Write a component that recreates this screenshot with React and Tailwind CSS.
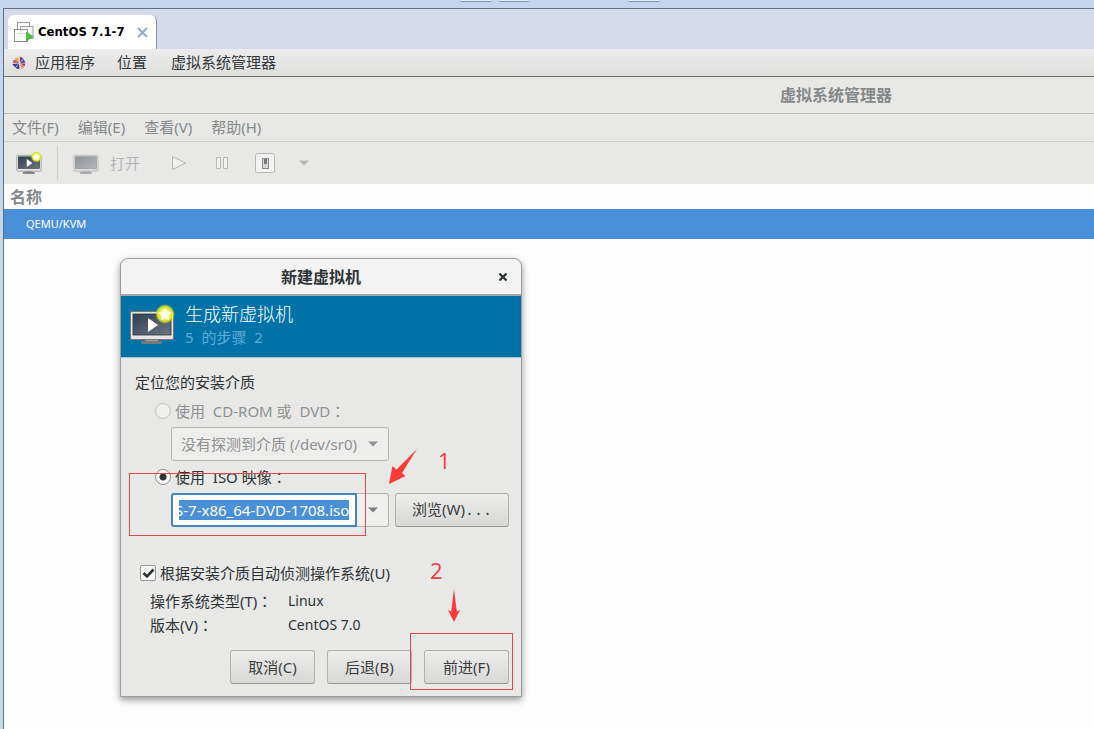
import React, { useEffect, useRef, useState } from 'react';

const MonitorIcon = ({ className, dimmed, star, play }) => (
  <svg viewBox="0 0 46 42" className={className} aria-hidden="true">
    <defs>
      <linearGradient id={dimmed ? 'scrDim' : 'scr'} x1="0" y1="0" x2="1" y2="1">
        <stop offset="0" stopColor={dimmed ? '#8f9499' : '#2f3e52'} />
        <stop offset="1" stopColor={dimmed ? '#b4b7ba' : '#6d7683'} />
      </linearGradient>
      <radialGradient id="glow">
        <stop offset="0" stopColor="#ffffff" />
        <stop offset="0.4" stopColor="#fdfb7a" />
        <stop offset="0.75" stopColor="#e2e81c" stopOpacity="0.9" />
        <stop offset="1" stopColor="#d8e010" stopOpacity="0" />
      </radialGradient>
    </defs>
    <path d="M17 34h11l2 5H15z" fill={dimmed ? '#b9b9b7' : '#9b9d9a'} />
    <rect x="12" y="37" width="21" height="3" rx="1" fill={dimmed ? '#a3a3a1' : '#787a76'} />
    <rect x="1.5" y="7.5" width="43" height="28" rx="1.5" fill={dimmed ? '#dcdcda' : '#e6e6e4'} stroke={dimmed ? '#a9a9a7' : '#777975'} />
    <rect x="4" y="10" width="38" height="21" fill={dimmed ? 'url(#scrDim)' : 'url(#scr)'} stroke={dimmed ? '#8d8f91' : '#2c3440'} strokeWidth="0.8" />
    {play && <path d="M19 14v14l10-7z" fill="#fff" />}
    {star && (
      <>
        <circle cx="36" cy="10" r="10" fill="url(#glow)" />
        <path d="M36 3.5l2 4.3 4.6.6-3.4 3.2.9 4.6-4.1-2.3-4.1 2.3.9-4.6-3.4-3.2 4.6-.6z" fill="#fffff0" />
      </>
    )}
  </svg>
);

const TabIcon = () => (
  <svg viewBox="0 0 20 20" className="h-5 w-5" fill="none" aria-hidden="true">
    <rect x="3.5" y="0.5" width="12" height="10" fill="#fff" stroke="#9a9a9a" />
    <rect x="6.5" y="4.5" width="12.5" height="12" fill="#fff" stroke="#9a9a9a" />
    <rect x="0.5" y="7.5" width="13" height="12" fill="#fff" stroke="#8c8c8c" />
    <path d="M6.5 8v6M3 11.5h9" stroke="#dcdcdc" />
    <path d="M12 9.5v10l8-5z" fill="#55b948" />
  </svg>
);

const CentosLogo = () => (
  <svg viewBox="0 0 16 16" className="h-3.5 w-3.5" aria-hidden="true">
    <path d="M3 2.500l4-1.500 1.500 6-2 0z" fill="#f0b63a" />
    <path d="M9 0.500l4 2-4 5z" fill="#7d3b8e" />
    <path d="M13 3.500l2.500 4-6.500 1z" fill="#5c4a9c" />
    <path d="M1 5l3-1 4 4-7 0z" fill="#c9627e" />
    <path d="M0.500 9l7-0.500-4 4.500z" fill="#3a3a8c" />
    <path d="M4 14l4-5.500 0.500 6.500z" fill="#2f3f95" />
    <path d="M9 9l2 6 3-2.500z" fill="#e8964a" />
    <path d="M9.500 8.500l6 0-1.500 3.500z" fill="#b23c7c" />
  </svg>
);

const Caret = ({ className }) => (
  <svg viewBox="0 0 10 6" className={className} aria-hidden="true">
    <path d="M0 0.500h10L5 5.500z" fill="currentColor" />
  </svg>
);

// full-width colon, centred in its cell
const Colon = () => <span className="font-['Noto_Sans_CJK_TC',sans-serif]">：</span>;

const DialogButton = ({ children, className }) => (
  <button
    className={`h-[34px] rounded-[3px] border border-[#b0b0ae] border-b-[#969694] bg-linear-to-b from-[#ededec] to-[#d8d8d6] text-[15px] text-[#3a3d3e] ${className}`}
  >
    {children}
  </button>
);

const Radio = ({ id, label, checked, disabled, onChange }) => (
  <div className="flex h-[22px] items-center gap-1 pl-5">
    <input
      id={id}
      type="radio"
      name="media"
      checked={checked}
      disabled={disabled}
      onChange={onChange}
      className="h-4 w-4 appearance-none rounded-full border border-[#8f9190] bg-[#f8f8f8] bg-[radial-gradient(circle,#2e3436_3px,transparent_4px)] not-checked:bg-none disabled:border-[#c2c2c0] disabled:bg-[#efefee]"
    />
    <label htmlFor={id} className={`whitespace-pre ${disabled ? 'text-[#8f9192]' : 'text-[#2e3436]'}`}>
      {label}
      <Colon />
    </label>
  </div>
);

const NewVmDialog = () => {
  const [media, setMedia] = useState('iso');
  const [iso, setIso] = useState('S-7-x86_64-DVD-1708.iso');
  const [detect, setDetect] = useState(true);
  const isoRef = useRef(null);

  // keep the end of the file name in view
  useEffect(() => {
    isoRef.current.scrollLeft = isoRef.current.scrollWidth;
  }, []);

  return (
    <section
      aria-label="新建虚拟机"
      className="absolute top-[19px] left-[116px] w-[402px] rounded-t-lg border border-[#9b9d9b] bg-[#e8e8e7] text-[15px] leading-[22px] text-[#2e3436] shadow-[0_3px_7px_rgba(0,0,0,0.4)]"
    >
      <header className="relative flex h-[35px] items-center justify-center rounded-t-lg bg-[#f3f3f3]">
        <h2 className="text-base font-bold">新建虚拟机</h2>
        <button aria-label="关闭" className="absolute right-3 flex h-3 w-3 items-center justify-center">
          <svg viewBox="0 0 10 10" className="h-2.5 w-2.5" aria-hidden="true">
            <path d="M1.500 1.500l7 7M8.500 1.500l-7 7" stroke="#2e3436" strokeWidth="2.300" />
          </svg>
        </button>
      </header>

      {/* Banner */}
      <div className="flex h-16 items-start gap-2.5 border-t-2 border-b border-t-[#a4a9ab] border-b-[#a9c6d4] bg-[#0072a8] pt-1.5 pl-2">
        <MonitorIcon className="mt-0.5 h-[42px] w-[46px]" star play />
        <div>
          <h3 className="text-lg leading-6 font-light text-white">生成新虚拟机</h3>
          <p className="whitespace-pre text-[#5eabd6]">5  的步骤  2</p>
        </div>
      </div>

      <div className="pt-[13px] pr-3 pb-3 pl-3.5">
        <p className="mb-[7px]">定位您的安装介质</p>

        <Radio
          id="cdrom"
          label="使用  CD-ROM 或  DVD"
          checked={media === 'cdrom'}
          disabled
          onChange={() => setMedia('cdrom')}
        />
        <div className="relative my-[5px] ml-9 w-[218px] text-[#8f9192]">
          <select
            aria-label="没有探测到介质 (/dev/sr0)"
            disabled
            className="block h-[34px] w-full appearance-none rounded-[3px] border border-[#b4b4b2] bg-[#ededec] pl-[9px] opacity-100"
          >
            <option>没有探测到介质 (/dev/sr0)</option>
          </select>
          <Caret className="pointer-events-none absolute top-[14px] right-[11px] h-1.5 w-2.5" />
        </div>

        <Radio id="iso" label="使用  ISO 映像" checked={media === 'iso'} onChange={() => setMedia('iso')} />
        <div className="mt-[5px] ml-9 flex h-[34px]">
          <div className="flex w-[186px] items-center rounded-l-[3px] border-2 border-[#4585c4] bg-white px-1.5">
            <input
              ref={isoRef}
              aria-label="ISO 映像"
              value={iso}
              onChange={(e) => setIso(e.target.value)}
              className="h-5 w-full bg-[#4a90d9] text-[15px] text-white outline-none"
            />
          </div>
          <button
            aria-label="选择 ISO"
            className="flex w-8 items-center justify-center rounded-r-[3px] border border-l-0 border-[#b4b4b2] bg-[#efefee] text-[#7d7f7f]"
          >
            <Caret className="h-1.5 w-2.5" />
          </button>
          <DialogButton className="ml-1.5 w-[114px]">
            浏览(W)<span className="font-['Liberation_Mono',monospace]">...</span>
          </DialogButton>
        </div>

        <div className="mt-[35px] flex h-[22px] items-center gap-1 pl-[5px]">
          <span className="relative flex">
            <input
              id="detect"
              type="checkbox"
              checked={detect}
              onChange={(e) => setDetect(e.target.checked)}
              className="h-4 w-4 appearance-none rounded-[2px] border border-[#979997] bg-[#f6f6f6]"
            />
            {detect && (
              <svg viewBox="0 0 16 16" className="pointer-events-none absolute inset-0 h-4 w-4" fill="none" aria-hidden="true">
                <path d="M3.500 8l3.500 3.500L13.500 4.500" stroke="#2e3436" strokeWidth="2.600" />
              </svg>
            )}
          </span>
          <label htmlFor="detect">根据安装介质自动侦测操作系统(U)</label>
        </div>
        <dl className="mt-1.5 flex flex-col gap-0.5 pl-[15px]">
          <div className="flex">
            <dt className="w-[138px]">操作系统类型(T)<Colon /></dt>
            <dd className="text-sm leading-[22px]">Linux</dd>
          </div>
          <div className="flex">
            <dt className="w-[138px]">版本(V)<Colon /></dt>
            <dd className="text-sm leading-[22px]">CentOS 7.0</dd>
          </div>
        </dl>

        <div className="mt-3.5 flex justify-end gap-3">
          <DialogButton className="w-[85px]">取消(C)</DialogButton>
          <DialogButton className="w-[85px]">后退(B)</DialogButton>
          <DialogButton className="w-[85px]">前进(F)</DialogButton>
        </div>
      </div>

      {/* Step markers */}
      <div className="pointer-events-none absolute top-[214px] left-2 h-[63px] w-[237px] border border-[#e0484c]" />
      <svg viewBox="0 0 28 35" className="absolute top-[190px] left-[268px] h-[35px] w-7" aria-hidden="true">
        <path d="M28 0L13 24 16.500 27 0 35 3.500 17 7.500 20.500z" fill="#fb3b39" />
      </svg>
      <span className="absolute top-[190px] left-[317px] font-['Open_Sans'] text-[22px] text-[#fb3b39]">1</span>
      <span className="absolute top-[300px] left-[309px] font-['Open_Sans'] text-[22px] text-[#fb3b39]">2</span>
      <svg viewBox="0 0 12 33" className="absolute top-[330px] left-[327px] h-[33px] w-3" aria-hidden="true">
        <path d="M6 0l2.800 22.500L12 21 6 33 0 21l3.200 1.500z" fill="#fb3b39" />
      </svg>
      <div className="pointer-events-none absolute top-[374px] left-[289px] h-[57px] w-[103px] border border-[#e0484c]" />
    </section>
  );
};

const App = () => {
  const menus = ['文件(F)', '编辑(E)', '查看(V)', '帮助(H)'];

  return (
    <div className="flex min-h-screen flex-col overflow-hidden bg-[#c4d8ed] font-['Noto_Sans','Noto_Sans_CJK_SC',sans-serif]">
      {/* Host toolbar edge */}
      <div className="flex h-2 items-start pl-[460px]">
        <span className="h-0.5 w-8 rounded-b border-b border-[#7898c0] bg-[#e4effa]" />
        <span className="ml-1.5 h-0.5 w-8 rounded-b border-b border-[#7898c0] bg-[#e4effa]" />
        <span className="ml-[98px] h-0.5 w-8 rounded-b border-b border-[#7898c0] bg-[#e4effa]" />
      </div>

      <div className="ml-[3px] flex flex-1 flex-col border-t border-l border-[#626d80]">
        {/* Tab strip */}
        <div className="flex h-10 items-end bg-[#d4d9ec] pl-1">
          <div className="flex h-[34px] items-center rounded-t-md border-r border-[#8590a8] bg-white pr-2 pl-1.5">
            <TabIcon />
            <a href="#vm" className="ml-1 font-['DejaVu_Sans_Condensed','DejaVu_Sans',sans-serif] text-[13px] font-bold text-black">
              CentOS 7.1-7
            </a>
            <button aria-label="关闭标签" className="ml-3">
              <svg viewBox="0 0 11 11" className="h-[11px] w-[11px]" aria-hidden="true">
                <path d="M1 1l9 9M10 1l-9 9" stroke="#89a9c6" strokeWidth="1.800" />
              </svg>
            </button>
          </div>
        </div>

        {/* Desktop panel */}
        <nav className="flex h-7 items-center border-b border-[#6c6f6c] bg-linear-to-b from-[#ececec] to-[#dfdfde] pl-2 text-[15px] text-[#33383a]">
          <CentosLogo />
          <button className="ml-[9px]">应用程序</button>
          <button className="ml-[22px]">位置</button>
          <button className="ml-6">虚拟系统管理器</button>
        </nav>

        <div className="flex h-[37px] items-center justify-center border-b border-[#bcbebc] bg-[#e8e8e7] pl-[574px]">
          <h1 className="text-base leading-5 font-bold whitespace-nowrap text-[#858989]">虚拟系统管理器</h1>
        </div>

        <nav className="flex h-7 items-center gap-[19px] border-b border-[#d0d1d0] bg-[#e8e8e7] pl-2 text-[15px] text-[#858989]">
          {menus.map((menu) => (
            <button key={menu}>{menu}</button>
          ))}
        </nav>

        {/* Toolbar */}
        <div className="flex h-[42px] items-center bg-[#e8e8e7] pl-3 text-[#b4b6b5]">
          <button aria-label="新建虚拟机">
            <MonitorIcon className="h-6 w-[26px]" star play />
          </button>
          <span className="mx-[15px] h-[34px] border-l border-[#cccdcc]" />
          <button className="flex items-center gap-[11px] text-[15px]" disabled>
            <MonitorIcon className="h-6 w-[26px]" dimmed />
            打开
          </button>
          <button aria-label="运行" className="ml-[31px]" disabled>
            <svg viewBox="0 0 16 16" className="h-4 w-4" fill="#f0f0ef" stroke="currentColor" aria-hidden="true">
              <path d="M1.500 1.500v13l13-6.500z" />
            </svg>
          </button>
          <button aria-label="暂停" className="ml-7" disabled>
            <svg viewBox="0 0 14 14" className="h-3.5 w-3.5" fill="#f0f0ef" stroke="currentColor" aria-hidden="true">
              <path d="M1.500 1.500h4v11h-4zM8.500 1.500h4v11h-4z" />
            </svg>
          </button>
          <button aria-label="关机" className="ml-[26px]" disabled>
            <svg viewBox="0 0 20 20" className="h-5 w-5" fill="none" aria-hidden="true">
              <rect x="0.500" y="0.500" width="19" height="19" rx="2" fill="#f3f3f2" stroke="#b5b6b5" />
              <rect x="7.500" y="5.500" width="6" height="10" fill="#d6d6d5" stroke="#8b8d8c" />
              <rect x="9" y="6" width="3" height="5" fill="#777978" />
            </svg>
          </button>
          <button aria-label="更多" className="ml-6" disabled>
            <Caret className="h-1.5 w-2.5" />
          </button>
        </div>

        {/* Machine list */}
        <table className="w-full border-collapse text-left">
          <thead>
            <tr className="h-[25px] bg-[#fdfdfd]">
              <th className="py-0 pl-1.5 text-base leading-5 font-bold text-[#858989]">名称</th>
            </tr>
          </thead>
          <tbody>
            <tr className="h-[30px] bg-[#4a90d9]">
              <td className="py-0 pl-[22px] text-[11px] text-white">QEMU/KVM</td>
            </tr>
          </tbody>
        </table>

        <main className="relative min-h-[480px] flex-1 bg-[#fdfdfd]">
          <NewVmDialog />
        </main>
      </div>
    </div>
  );
};

export default App;
